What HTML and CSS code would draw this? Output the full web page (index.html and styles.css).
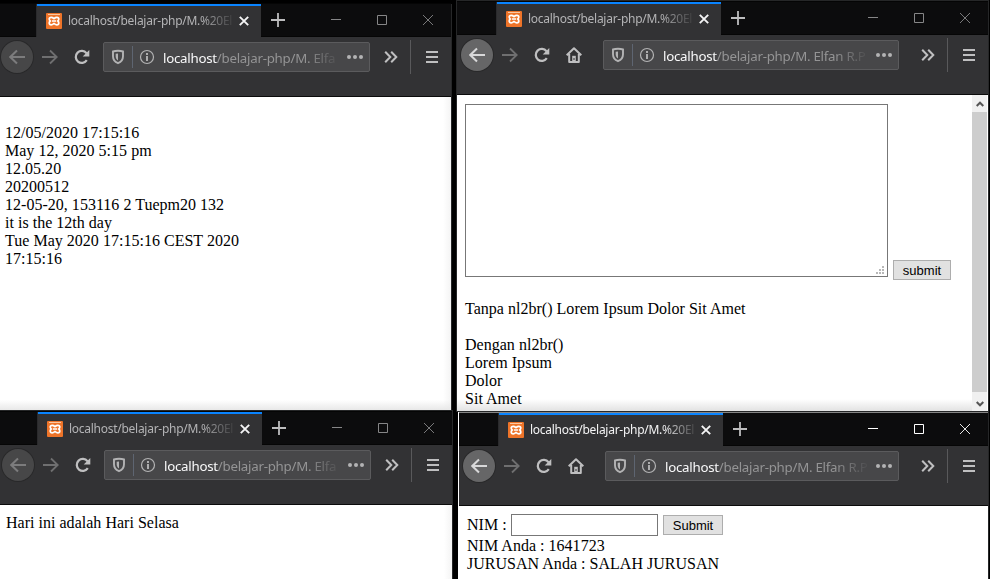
FILE: index.html
```html
<!DOCTYPE html>
<html lang="id">
<head>
<meta charset="utf-8">
<title>localhost/belajar-php</title>
<link rel="stylesheet" href="styles.css">
</head>
<body>
<svg class="defs" aria-hidden="true">
  <symbol id="favicon" viewBox="0 0 16 16"><rect width="16" height="16" rx="1" fill="#ee7429"/><path d="M2 1.500h12" stroke="#fbc7a0"/><path d="M5.200 4.300c1.200 0 1.900.6 2.800 1.300.9-.7 1.600-1.300 2.800-1.300 1.300 0 2 .8 2 1.800 0 .8-.4 1.400-1 1.900.6.500 1 1.100 1 2 0 1.100-.7 1.800-2 1.800-1.200 0-1.900-.6-2.800-1.300-.9.700-1.600 1.300-2.800 1.300-1.300 0-2-.7-2-1.800 0-.9.4-1.500 1-2-.6-.5-1-1.100-1-1.900 0-1 .7-1.800 2-1.800zM6 8h4" fill="none" stroke="#fff" stroke-width="1.700"/></symbol>
  <symbol id="x" viewBox="0 0 10 10"><path d="M.8.8l8.400 8.400M9.200.8L.8 9.200" fill="none" stroke="currentColor" stroke-width="1.900"/></symbol>
  <symbol id="plus" viewBox="0 0 14 14"><path d="M7 0v14M0 7h14" stroke="currentColor" stroke-width="1.800"/></symbol>
  <symbol id="min" viewBox="0 0 10 10"><path d="M0 4.500h10" stroke="currentColor"/></symbol>
  <symbol id="max" viewBox="0 0 10 10"><path d="M.5.5h9v9h-9z" fill="none" stroke="currentColor"/></symbol>
  <symbol id="quit" viewBox="0 0 10 10"><path d="M0 0l10 10M10 0L0 10" stroke="currentColor" stroke-width=".9"/></symbol>
  <symbol id="back" viewBox="0 0 16 16"><path d="M16 8H1.500M8 1.500L1.300 8 8 14.500" fill="none" stroke="currentColor" stroke-width="2"/></symbol>
  <symbol id="forward" viewBox="0 0 16 16"><path d="M0 8h14.500M8 1.500L14.700 8 8 14.500" fill="none" stroke="currentColor" stroke-width="1.800"/></symbol>
  <symbol id="reload" viewBox="0 0 16 16"><path d="M12.800 11.200A6 6 0 1 1 12.500 4.200" fill="none" stroke="currentColor" stroke-width="2.200"/><path d="M15.300 1v6.600H8.700z" fill="currentColor"/></symbol>
  <symbol id="home" viewBox="0 0 16 16"><path d="M.7 8.300L8 1.200l7.300 7.100M3.200 7v8h9.600V7" fill="none" stroke="currentColor" stroke-width="2" stroke-linejoin="round"/><path d="M6.200 8.800h3.600V15H6.200z" fill="currentColor"/><path d="M8 11v2" stroke="#323234"/></symbol>
  <symbol id="shield" viewBox="0 0 14 16"><path d="M7 1.800c1.800 0 3.500.2 5 .7v4.700c0 3.500-2 5.800-5 7-3-1.200-5-3.500-5-7V2.500c1.500-.5 3.200-.7 5-.7z" fill="none" stroke="currentColor" stroke-width="1.900"/><path d="M7 4.500v7c-1.500-1-2.300-2.400-2.300-4.300V4.700z" fill="currentColor"/></symbol>
  <symbol id="info" viewBox="0 0 16 16"><circle cx="8" cy="8" r="6.500" fill="none" stroke="currentColor" stroke-width="1.200"/><path d="M8 7v5M8 4v1.900" stroke="currentColor" stroke-width="1.900"/></symbol>
  <symbol id="dots" viewBox="0 0 16 4"><circle cx="2" cy="2" r="2" fill="currentColor"/><circle cx="8" cy="2" r="2" fill="currentColor"/><circle cx="14" cy="2" r="2" fill="currentColor"/></symbol>
  <symbol id="more" viewBox="0 0 14 12"><path d="M1.200.7L6.300 6l-5.100 5.300M7.200.7L12.300 6l-5.100 5.300" fill="none" stroke="currentColor" stroke-width="2"/></symbol>
  <symbol id="menu" viewBox="0 0 12 12"><path d="M0 1h12M0 6h12M0 11h12" stroke="currentColor" stroke-width="2"/></symbol>
  <symbol id="chev" viewBox="0 0 8 6"><path d="M.7 5L4 1.700 7.300 5" fill="none" stroke="currentColor" stroke-width="2"/></symbol>
</svg>

<main class="desktop">
  <section class="window dates small">
    <header class="tabbar">
      <div class="tab"><svg class="favicon"><use href="#favicon"/></svg><span class="tab-title">localhost/belajar-php/M.%20El</span><svg class="tab-close"><use href="#x"/></svg></div>
      <svg class="plus"><use href="#plus"/></svg>
      <div class="controls"><svg><use href="#min"/></svg><svg><use href="#max"/></svg><svg><use href="#quit"/></svg></div>
    </header>
    <nav class="toolbar"><div class="row">
      <span class="btn circle"><svg><use href="#back"/></svg></span><span class="btn forward"><svg><use href="#forward"/></svg></span><span class="btn"><svg><use href="#reload"/></svg></span>
      <div class="url"><svg class="shield"><use href="#shield"/></svg><i class="rule"></i><svg class="info"><use href="#info"/></svg><span class="address"><b>localhost</b>/belajar-php/M. Elfa</span><svg class="dots"><use href="#dots"/></svg></div>
      <span class="btn"><svg class="more"><use href="#more"/></svg></span><i class="divider"></i><span class="btn"><svg class="menu"><use href="#menu"/></svg></span>
    </div></nav>
    <article class="page"><br>12/05/2020 17:15:16<br>May 12, 2020 5:15 pm<br>12.05.20<br>20200512<br>12-05-20, 153116 2 Tuepm20 132<br>it is the 12th day<br>Tue May 2020 17:15:16 CEST 2020<br>17:15:16</article>
  </section>

  <section class="window lorem wide">
    <header class="tabbar">
      <div class="tab"><svg class="favicon"><use href="#favicon"/></svg><span class="tab-title">localhost/belajar-php/M.%20El</span><svg class="tab-close"><use href="#x"/></svg></div>
      <svg class="plus"><use href="#plus"/></svg>
      <div class="controls"><svg><use href="#min"/></svg><svg><use href="#max"/></svg><svg><use href="#quit"/></svg></div>
    </header>
    <nav class="toolbar"><div class="row">
      <span class="btn circle"><svg><use href="#back"/></svg></span><span class="btn forward"><svg><use href="#forward"/></svg></span><span class="btn"><svg><use href="#reload"/></svg></span><span class="btn"><svg><use href="#home"/></svg></span>
      <div class="url"><svg class="shield"><use href="#shield"/></svg><i class="rule"></i><svg class="info"><use href="#info"/></svg><span class="address"><b>localhost</b>/belajar-php/M. Elfan R.P</span><svg class="dots"><use href="#dots"/></svg></div>
      <span class="btn"><svg class="more"><use href="#more"/></svg></span><i class="divider"></i><span class="btn"><svg class="menu"><use href="#menu"/></svg></span>
    </div></nav>
    <div class="scroller">
      <article class="page">
        <form class="compose"><div class="area"><svg class="grip" viewBox="0 0 8 8"><path d="M6 0h2v2H6zM3 3h2v2H3zM6 3h2v2H6zM0 6h2v2H0zM3 6h2v2H3zM6 6h2v2H6z" fill="#b8b8b8"/></svg></div><button type="button">submit</button></form>
        <p>Tanpa nl2br() Lorem Ipsum Dolor Sit Amet</p>
        <p>Dengan nl2br()<br>Lorem Ipsum<br>Dolor<br>Sit Amet</p>
      </article>
      <div class="scrollbar"><svg class="up"><use href="#chev"/></svg><div class="thumb"></div><svg class="down"><use href="#chev"/></svg></div>
    </div>
  </section>

  <section class="window today small">
    <header class="tabbar">
      <div class="tab"><svg class="favicon"><use href="#favicon"/></svg><span class="tab-title">localhost/belajar-php/M.%20El</span><svg class="tab-close"><use href="#x"/></svg></div>
      <svg class="plus"><use href="#plus"/></svg>
      <div class="controls"><svg><use href="#min"/></svg><svg><use href="#max"/></svg><svg><use href="#quit"/></svg></div>
    </header>
    <nav class="toolbar"><div class="row">
      <span class="btn circle"><svg><use href="#back"/></svg></span><span class="btn forward"><svg><use href="#forward"/></svg></span><span class="btn"><svg><use href="#reload"/></svg></span>
      <div class="url"><svg class="shield"><use href="#shield"/></svg><i class="rule"></i><svg class="info"><use href="#info"/></svg><span class="address"><b>localhost</b>/belajar-php/M. Elfa</span><svg class="dots"><use href="#dots"/></svg></div>
      <span class="btn"><svg class="more"><use href="#more"/></svg></span><i class="divider"></i><span class="btn"><svg class="menu"><use href="#menu"/></svg></span>
    </div></nav>
    <article class="page">Hari ini adalah Hari Selasa</article>
  </section>

  <section class="window student wide active">
    <header class="tabbar">
      <div class="tab"><svg class="favicon"><use href="#favicon"/></svg><span class="tab-title">localhost/belajar-php/M.%20El</span><svg class="tab-close"><use href="#x"/></svg></div>
      <svg class="plus"><use href="#plus"/></svg>
      <div class="controls"><svg><use href="#min"/></svg><svg><use href="#max"/></svg><svg><use href="#quit"/></svg></div>
    </header>
    <nav class="toolbar"><div class="row">
      <span class="btn circle"><svg><use href="#back"/></svg></span><span class="btn forward"><svg><use href="#forward"/></svg></span><span class="btn"><svg><use href="#reload"/></svg></span><span class="btn"><svg><use href="#home"/></svg></span>
      <div class="url"><svg class="shield"><use href="#shield"/></svg><i class="rule"></i><svg class="info"><use href="#info"/></svg><span class="address"><b>localhost</b>/belajar-php/M. Elfan R.P</span><svg class="dots"><use href="#dots"/></svg></div>
      <span class="btn"><svg class="more"><use href="#more"/></svg></span><i class="divider"></i><span class="btn"><svg class="menu"><use href="#menu"/></svg></span>
    </div></nav>
    <article class="page">
      <form class="nim"><label for="nim">NIM :</label><input id="nim" type="text"><button type="button">Submit</button></form>
      NIM Anda : 1641723<br>JURUSAN Anda : SALAH JURUSAN
    </article>
  </section>
</main>
</body>
</html>
```
FILE: styles.css
```css
* { box-sizing: border-box; }
body { margin: 0; background: #000; }
.defs { position: absolute; width: 0; height: 0; }
svg { display: block; flex: none; }
.desktop { position: relative; width: 990px; height: 579px; overflow: hidden; background: #000; }

/* Windows */
.window { position: absolute; display: flex; flex-direction: column; background: #fff; box-shadow: 0 0 0 1px #262728; }
.dates { left: -3px; top: 3px; width: 454px; height: 407px; box-shadow: 1px 1px 0 #262728; }
.lorem { left: 457px; top: 1px; width: 531px; height: 410px; }
.today { left: -2px; top: 411px; width: 454px; height: 180px; }
.student { left: 459px; top: 412px; width: 529px; height: 180px; box-shadow: -1px 0 0 #fff, 1px 0 0 #262728; }
.student .tabbar { border-top: 1px solid #858585; }

/* Tabs */
.tabbar { display: flex; align-items: flex-start; flex: none; height: 34px; background: #0c0c0d; border-top: 1px solid #050505; border-bottom: 1px solid #060606; }
.tab { display: flex; align-items: center; width: 225px; height: 33px; margin-left: 39px; padding: 0 12px 0 9px; background: #323234; border-left: 1px solid #2a2a2c; box-shadow: inset 0 2px #0a84ff; }
.favicon { width: 16px; height: 16px; }
.tab-title { width: 167px; margin-left: 6px; white-space: nowrap; font: 12px/18px "Noto Sans", sans-serif; letter-spacing: -0.27px; color: #b4b4b6; -webkit-mask-image: linear-gradient(90deg, #000 132px, transparent 168px); mask-image: linear-gradient(90deg, #000 132px, transparent 168px); }
.active .tab-title { color: #f4f4f5; }
.tab-close { width: 10px; height: 10px; margin-left: 4px; color: #f4f4f5; }
.plus { width: 14px; height: 14px; margin: 9px 0 0 10px; color: #bdbdbe; }
.controls { display: flex; gap: 36px; margin: 11px 18px 0 auto; color: #868687; }
.controls svg { width: 10px; height: 10px; }
.active .controls { color: #fff; }

/* Toolbar */
.toolbar { flex: none; height: 60px; background: #323234; border-bottom: 1px solid #0b0b0b; }
.row { display: flex; align-items: center; height: 40px; padding: 0 3px 0 4px; color: #bfbfc0; }
.btn { display: flex; align-items: center; justify-content: center; flex: none; width: 32px; height: 32px; }
.btn svg { width: 16px; height: 16px; }
.circle { border-radius: 50%; background: #666667; box-shadow: 0 0 0 1px #29292a; color: #d8d8d9; }
.small .circle { background: #474748; color: #7c7c7d; }
.forward { margin-left: 1px; color: #6f6f70; }
.url { display: flex; align-items: center; flex: 1; min-width: 0; height: 30px; margin: 0 5px; padding: 0 6px 0 7px; border: 1px solid #5b5b5d; border-radius: 2px; background: #474749; color: #b3b3b4; }
.wide .url { margin: 0 13px; }
.shield { width: 14px; height: 16px; }
.rule { width: 1px; height: 22px; margin: 0 6px 0 7px; background: #5e6571; }
.info { width: 16px; height: 16px; }
.address { flex: 1; min-width: 0; margin: 2px 6px 0 8px; white-space: nowrap; font: 13.300px/20px "Noto Sans", sans-serif; letter-spacing: -0.26px; color: #949495; -webkit-mask-image: linear-gradient(270deg, transparent 0, #000 36px); mask-image: linear-gradient(270deg, transparent 0, #000 36px); }
.address b { font-weight: 400; color: #f9f9fa; }
.dots { width: 16px; height: 4px; }
.btn .more { width: 14px; height: 12px; }
.btn .menu { width: 12px; height: 12px; }
.divider { width: 1px; height: 34px; margin: 0 5px 0 3px; background: #59595b; }

/* Pages */
.page { flex: 1; min-width: 0; padding: 9px 8px; font: 16px/18px "Liberation Serif", serif; letter-spacing: 0.02px; color: #000; }
.page p { margin: 0 0 18px; }
.dates .page { background: linear-gradient(0deg, #e8e8e8, rgba(255,255,255,0) 10px), linear-gradient(270deg, #f4f4f4, #fff 8px); }
.today .page { background: linear-gradient(270deg, #f4f4f4, #fff 8px); }
.scroller { display: flex; flex: 1; min-height: 0; }
.lorem .page { background: linear-gradient(0deg, #e2e2e2, #fff 12px); }
.compose { display: flex; align-items: flex-end; gap: 5px; height: 176px; margin-bottom: 20px; }
.area { display: flex; align-items: flex-end; justify-content: flex-end; width: 423px; height: 173px; margin-bottom: 3px; padding: 2px 3px; border: 1px solid #777; background: #fff; }
.grip { width: 8px; height: 8px; }
button { width: 58px; height: 20px; padding: 1px 0 0; border: 1px solid #adadad; background: #e1e1e1; font: 13px/17px "Liberation Sans", sans-serif; color: #000; }
.scrollbar { display: flex; flex-direction: column; align-items: center; width: 16px; background: #f0f0f0; border-right: 1px solid #fff; color: #555; }
.scrollbar svg { width: 8px; height: 6px; }
.up { margin: 6px 0 5px; }
.thumb { width: 15px; height: 280px; background: #cdcdcd; }
.down { margin-top: 9px; transform: rotate(180deg); }
.student .page { padding-top: 8px; }
.nim { display: flex; align-items: center; height: 22px; margin-bottom: 1px; }
.nim input { width: 147px; height: 22px; margin: 0 5px 0 3px; padding: 2px; border: 1px solid #777; background: #fff; }
.nim button { width: 60px; }
.nim label { width: 41px; white-space: nowrap; }
```
